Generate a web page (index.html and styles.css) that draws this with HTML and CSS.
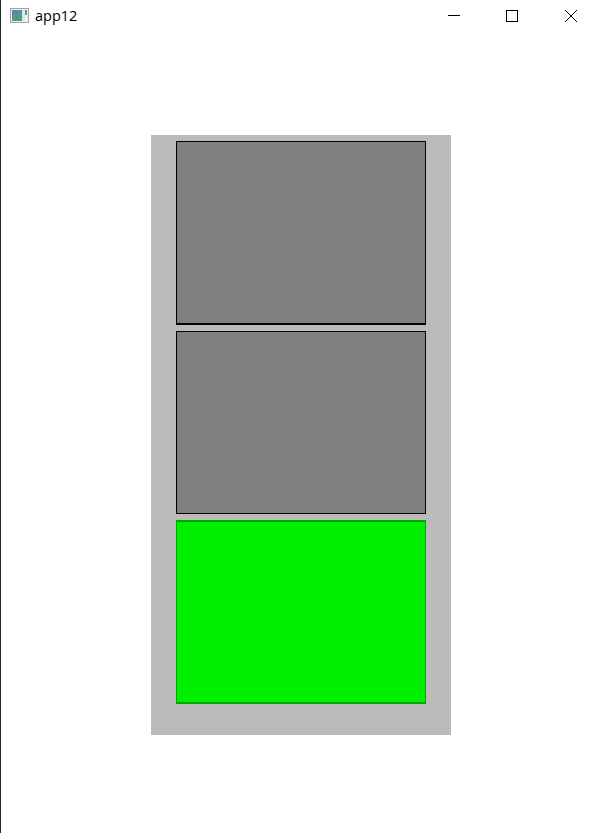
FILE: index.html
```html
<!DOCTYPE html>
<html lang="en">
<head>
    <meta charset="UTF-8">
    <title>app12</title>
    <link rel="stylesheet" href="styles.css">
</head>
<body>
    <div class="window">
        <div class="titlebar">
            <svg class="app-icon" width="20" height="15" viewBox="0 0 20 15">
                <defs>
                    <linearGradient id="icon-fill" x1="0" y1="0" x2="0.6" y2="1">
                        <stop offset="0" stop-color="#5b84b0"/>
                        <stop offset="1" stop-color="#4f9f78"/>
                    </linearGradient>
                </defs>
                <rect x="0.5" y="0.5" width="18" height="14" fill="#f0f2f3" stroke="#9aa3a8"/>
                <rect x="2" y="2" width="10" height="11" fill="url(#icon-fill)"/>
                <rect x="12" y="2" width="3" height="11" fill="#dfe5e3"/>
                <rect x="15" y="2" width="2" height="5" fill="#5f9a98"/>
            </svg>
            <span class="title">app12</span>
            <div class="controls">
                <button class="control" type="button">
                    <svg width="12" height="12" viewBox="0 0 12 12"><path d="M0 5.5H12" stroke="#000" fill="none"/></svg>
                </button>
                <button class="control" type="button">
                    <svg width="12" height="12" viewBox="0 0 12 12"><rect x="0.5" y="0.5" width="11" height="11" stroke="#000" fill="none"/></svg>
                </button>
                <button class="control" type="button">
                    <svg width="14" height="14" viewBox="0 0 14 14"><path d="M1 1L13 13M13 1L1 13" stroke="#000" fill="none"/></svg>
                </button>
            </div>
        </div>
        <div class="content">
            <div class="panel">
                <div class="box box-first"></div>
                <div class="box box-middle"></div>
                <div class="box box-active"></div>
            </div>
        </div>
    </div>
</body>
</html>
```

FILE: styles.css
```css
html, body {
    height: 100%;
}

body {
    margin: 0;
    background-color: #fff;
    font-family: "Open Sans", "Liberation Sans", sans-serif;
    overflow: hidden;
}

.window {
    display: flex;
    flex-direction: column;
    height: 100%;
    box-sizing: border-box;
    border-left: 1px solid #262626;
}

.titlebar {
    display: flex;
    align-items: center;
    height: 31px;
    padding-left: 9px;
    flex-shrink: 0;
}

.app-icon {
    margin-right: 5px;
}

.title {
    font-size: 14.5px;
    color: #000;
}

.controls {
    display: flex;
    margin-left: auto;
    margin-right: -2px;
}

.control {
    display: flex;
    align-items: center;
    justify-content: center;
    width: 58.5px;
    height: 31px;
    padding: 0;
    border: none;
    background: none;
}

.content {
    padding-top: 104px;
    padding-left: 150px;
}

.panel {
    display: flex;
    flex-direction: column;
    gap: 6px;
    width: 300px;
    height: 600px;
    box-sizing: border-box;
    padding: 6px 25px 0;
    background-color: #bbb;
}

.box {
    height: 184px;
    box-sizing: border-box;
    border: 1px solid #000;
    background-color: #808080;
}

.box-first {
    border-bottom-width: 2px;
}

.box-middle {
    height: 183px;
}

.box-active {
    border-color: #00a800;
    border-width: 2px 1px;
    background-color: #00f000;
}
```
